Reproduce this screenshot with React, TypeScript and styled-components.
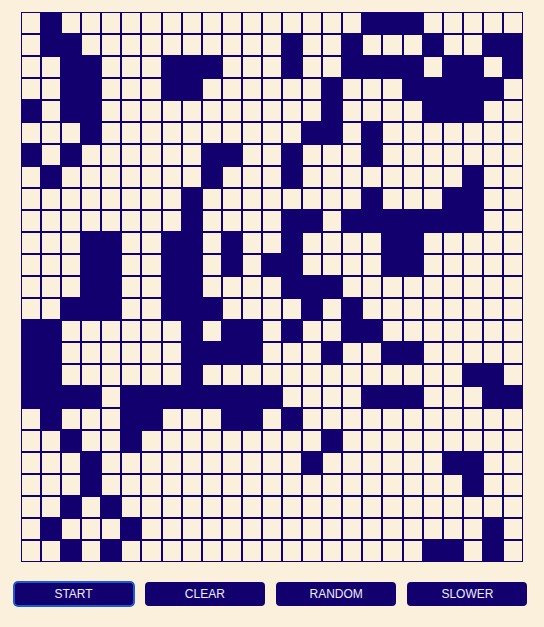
import React from "react";
import styled, { createGlobalStyle } from "styled-components";

const DARK = "#13006f";
const CREAM = "#fbf0dc";

const GlobalStyle = createGlobalStyle`
  html, body {
    margin: 0;
    padding: 0;
    background: ${CREAM};
    font-family: "Liberation Sans", Arial, sans-serif;
  }
`;

const Page = styled.div`
  display: flex;
  flex-direction: column;
  align-items: center;
  padding-top: 12px;
  min-height: 627px;
  box-sizing: border-box;
  background: ${CREAM};
`;

const Board = styled.div`
  display: grid;
  width: 502px;
  grid-template-columns: repeat(25, 1fr);
  grid-auto-rows: 22px;
`;

const Cell = styled.div<{ $alive: boolean }>`
  box-sizing: border-box;
  border: 1px solid ${DARK};
  background: ${(p) => (p.$alive ? DARK : CREAM)};
`;

const Controls = styled.div`
  display: flex;
  justify-content: center;
  gap: 11.3px;
  margin-top: 20px;
  padding-right: 3px;
`;

const Button = styled.button<{ $focused?: boolean }>`
  width: 120px;
  height: 24px;
  padding: 0;
  border: none;
  border-radius: 4px;
  background: ${DARK};
  color: #ececf6;
  font-family: "Liberation Sans", Arial, sans-serif;
  font-size: 12px;
  text-transform: uppercase;
  cursor: pointer;
  outline: ${(p) => (p.$focused ? "2px solid #1f5cc9" : "none")};
  outline-offset: -1px;
`;

const ALIVE: number[][] = [
  [1, 17, 18, 19],
  [1, 2, 13, 16, 20, 23, 24],
  [2, 3, 7, 8, 9, 13, 16, 17, 18, 19, 21, 22, 24],
  [2, 3, 7, 8, 15, 19, 20, 21, 22, 23],
  [0, 2, 3, 15, 20, 21, 22],
  [3, 14, 15, 17],
  [0, 2, 9, 10, 13, 17],
  [1, 9, 13, 22],
  [8, 17, 21, 22],
  [8, 13, 14, 16, 17, 18, 19, 20, 21, 22],
  [3, 4, 7, 8, 10, 13, 18, 19],
  [3, 4, 7, 8, 10, 12, 13, 18, 19],
  [3, 4, 7, 8, 13, 14, 15],
  [2, 3, 4, 7, 8, 9, 14, 16],
  [0, 1, 8, 10, 11, 13, 16, 17],
  [0, 1, 8, 9, 10, 11, 15, 18, 19],
  [0, 1, 8, 22, 23],
  [0, 1, 2, 3, 5, 6, 7, 8, 9, 10, 11, 12, 17, 18, 19, 23, 24],
  [1, 5, 6, 10, 11, 13],
  [2, 5, 15],
  [3, 14, 21, 22],
  [3, 22],
  [2, 4],
  [1, 5, 23],
  [2, 4, 20, 21, 23],
];

const SIZE = 25;

export default function App() {
  const cells: boolean[] = [];
  for (let r = 0; r < SIZE; r++) {
    const row = new Set(ALIVE[r]);
    for (let c = 0; c < SIZE; c++) cells.push(row.has(c));
  }
  return (
    <>
      <GlobalStyle />
      <Page>
        <Board>
          {cells.map((alive, i) => (
            <Cell key={i} $alive={alive} />
          ))}
        </Board>
        <Controls>
          <Button $focused>Start</Button>
          <Button>Clear</Button>
          <Button>Random</Button>
          <Button>Slower</Button>
        </Controls>
      </Page>
    </>
  );
}
